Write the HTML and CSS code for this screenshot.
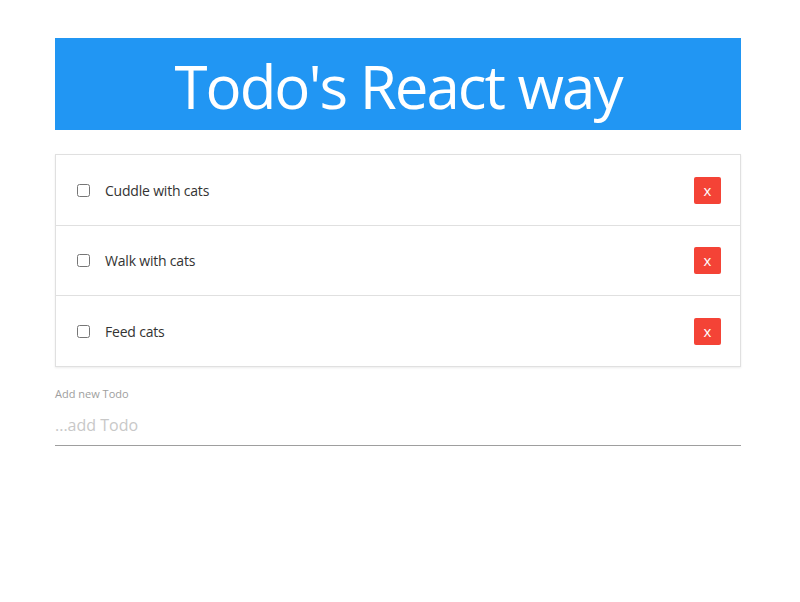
FILE: index.html
```html
<!DOCTYPE html>
<html>
<head>
<meta charset="utf-8">
<link rel="stylesheet" href="styles.css">
</head>
<body>
<div class="app">
  <h1 class="title">Todo's React way</h1>
  <ul class="collection">
    <li class="item"><label class="check"><input type="checkbox"><span>Cuddle with cats</span></label><button class="del">x</button></li>
    <li class="item"><label class="check"><input type="checkbox"><span>Walk with cats</span></label><button class="del">x</button></li>
    <li class="item"><label class="check"><input type="checkbox"><span>Feed cats</span></label><button class="del">x</button></li>
  </ul>
  <div class="field">
    <label class="field-label">Add new Todo</label>
    <input class="field-input" type="text" placeholder="...add Todo">
  </div>
</div>
</body>
</html>
```
FILE: styles.css
```css
html, body { margin: 0; padding: 0; background: #fff; }
body { font-family: "Open Sans", "Noto Sans", sans-serif; color: #333; }
.app { width: 686px; margin: 38px 0 0 55px; }
.title {
  margin: 0;
  height: 92px;
  overflow: hidden;
  background: #2196f3;
  color: #fff;
  font-weight: 400;
  font-size: 60px;
  line-height: 97px;
  text-align: center;
  letter-spacing: -2px;
}
.collection {
  list-style: none;
  margin: 24px 0 0;
  padding: 0;
  border: 1px solid #e0e0e0;
  box-shadow: 0 1px 2px rgba(0,0,0,0.08);
}
.item {
  height: 71px;
  box-sizing: border-box;
  display: flex;
  align-items: center;
  justify-content: space-between;
  padding: 0 19px 0 21px;
  border-bottom: 1px solid #e0e0e0;
}
.item:nth-child(2) { height: 70px; }
.item:last-child { border-bottom: none; height: 70px; }
.check { display: flex; align-items: center; font-size: 14px; color: #333; letter-spacing: -0.2px; }
.check input { width: 13px; height: 13px; margin: 0 15px 0 0; }
.del {
  width: 27px; height: 27px;
  border: none; border-radius: 2px;
  background: #f44336; color: #fff;
  font-family: "Open Sans", sans-serif; font-size: 15px;
  padding: 0; line-height: 27px;
}
.field { margin-top: 19px; }
.field-label { display: block; font-size: 11px; color: #9e9e9e; }
.field-input {
  display: block; width: 100%; box-sizing: border-box;
  border: none; border-bottom: 1px solid #9e9e9e;
  outline: none; padding: 0; margin-top: 3px;
  height: 42px; font-size: 16px; font-family: "Open Sans", sans-serif; color: #333;
}
.field-input::placeholder { color: #c8c8c8; }
```
